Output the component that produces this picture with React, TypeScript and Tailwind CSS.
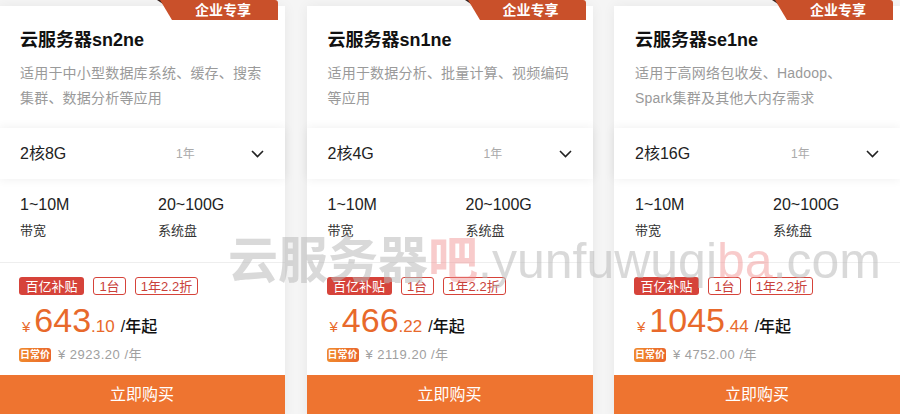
const FONT = { fontFamily: '"Liberation Sans", "Noto Sans CJK SC", sans-serif' };

type Plan = {
  name: string;
  desc: string[];
  spec: string;
  price: string;
  cents: string;
  daily: string;
};

const plans: Plan[] = [
  {
    name: "云服务器sn2ne",
    desc: ["适用于中小型数据库系统、缓存、搜索", "集群、数据分析等应用"],
    spec: "2核8G",
    price: "643",
    cents: ".10",
    daily: "¥ 2923.20 /年",
  },
  {
    name: "云服务器sn1ne",
    desc: ["适用于数据分析、批量计算、视频编码", "等应用"],
    spec: "2核4G",
    price: "466",
    cents: ".22",
    daily: "¥ 2119.20 /年",
  },
  {
    name: "云服务器se1ne",
    desc: ["适用于高网络包收发、Hadoop、", "Spark集群及其他大内存需求"],
    spec: "2核16G",
    price: "1045",
    cents: ".44",
    daily: "¥ 4752.00 /年",
  },
];

function Badge() {
  return (
    <div className="absolute right-[7px] top-[-6px] h-[20px] w-[121px]">
      <svg className="absolute inset-0" width="121" height="20" viewBox="0 0 121 20">
        <polygon points="0,0 9,0 9,6" fill="#3a2520" />
        <path d="M3 0 H118 Q121 0 121 3 V20 H15 Z" fill="#c9502a" />
      </svg>
      <div className="relative flex h-full items-center pl-[38px] text-[14px] font-bold leading-none text-white">
        企业专享
      </div>
    </div>
  );
}

function Card({ plan }: { plan: Plan }) {
  return (
    <div className="relative mt-[6px] flex w-[286px] shrink-0 flex-col bg-white shadow-[0_0_12px_rgba(0,0,0,0.06)]">
      <Badge />
      <div className="h-[122px] px-[21px] pt-[21px]">
        <div className="text-[18px] font-bold leading-[26px] text-[#111]">{plan.name}</div>
        <div className="mt-[8px] text-[14px] tracking-[0.2px] leading-[25px] text-[#9a9a9a]">
          {plan.desc.map((d) => (
            <div key={d}>{d}</div>
          ))}
        </div>
      </div>
      <div className="flex h-[51px] items-center px-[21px] shadow-[0_0_10px_rgba(0,0,0,0.07)]">
        <div className="w-[156px] text-[16px] text-[#222]">{plan.spec}</div>
        <div className="text-[12px] text-[#aaa]">1年</div>
        <svg className="ml-auto" width="13" height="8" viewBox="0 0 13 8">
          <path d="M1 1 L6.5 6.5 L12 1" fill="none" stroke="#222" strokeWidth="1.6" />
        </svg>
      </div>
      <div className="flex border-b border-[#eeeeee] px-[21px] pb-[22px] pt-[15px]">
        <div className="w-[138px]">
          <div className="text-[16px] leading-[22px] text-[#222]">1~10M</div>
          <div className="mt-[6px] text-[13px] leading-[18px] text-[#333]">带宽</div>
        </div>
        <div>
          <div className="text-[16px] leading-[22px] text-[#222]">20~100G</div>
          <div className="mt-[6px] text-[13px] leading-[18px] text-[#333]">系统盘</div>
        </div>
      </div>
      <div className="px-[20px] pt-[14px]">
        <div className="flex gap-[9px] text-[13px] leading-none">
          <span className="flex h-[18px] w-[65px] items-center justify-center rounded-[3px] bg-[#d6433a] text-white">
            百亿补贴
          </span>
          <span className="flex h-[18px] w-[33px] items-center justify-center rounded-[3px] border border-[#d6433a] text-[#c9413a]">
            1台
          </span>
          <span className="flex h-[18px] w-[63px] items-center justify-center rounded-[3px] border border-[#d6433a] text-[#c9413a]">
            1年2.2折
          </span>
        </div>
        <div className="mt-[8px] flex items-baseline leading-none text-[#e8692b]">
          <span className="ml-[3px] mr-[4px] text-[15px]">¥</span>
          <span className="text-[34px]">{plan.price}</span>
          <span className="text-[17px]">{plan.cents}</span>
          <span className="ml-[6px] text-[16px] font-medium text-[#111]">/年起</span>
        </div>
        <div className="mt-[11px] flex h-[14px] items-center">
          <span className="flex h-[14px] w-[32px] items-center justify-center rounded-[3px] bg-gradient-to-r from-[#f08a2c] to-[#e9662c] text-[10px] font-bold leading-none text-white">
            日常价
          </span>
          <span className="ml-[7px] text-[13px] tracking-[0.5px] text-[#a0a0a0]">{plan.daily}</span>
        </div>
      </div>
      <div className="mt-[13px] flex h-[44px] items-center justify-center bg-[#ee7430] pb-[4px] text-[16px] text-white">
        立即购买
      </div>
    </div>
  );
}

export default function App() {
  return (
    <div className="relative h-[414px] w-[900px] overflow-hidden bg-[#f5f5f5]" style={FONT}>
      <div className="ml-[-1px] flex gap-[21.5px]">
        {plans.map((p) => (
          <Card key={p.name} plan={p} />
        ))}
      </div>
      <div className="pointer-events-none absolute left-[228px] top-[236px] flex whitespace-nowrap text-[50px] leading-none">
        <span className="font-bold text-[rgba(185,185,185,0.55)]">云服务器</span>
        <span className="font-bold text-[rgba(240,140,140,0.45)]">吧</span>
        <span className="text-[rgba(185,185,185,0.55)]">.yunfuwuqi</span>
        <span className="text-[rgba(240,140,140,0.45)]">ba</span>
        <span className="text-[rgba(185,185,185,0.55)]">.com</span>
      </div>
    </div>
  );
}
